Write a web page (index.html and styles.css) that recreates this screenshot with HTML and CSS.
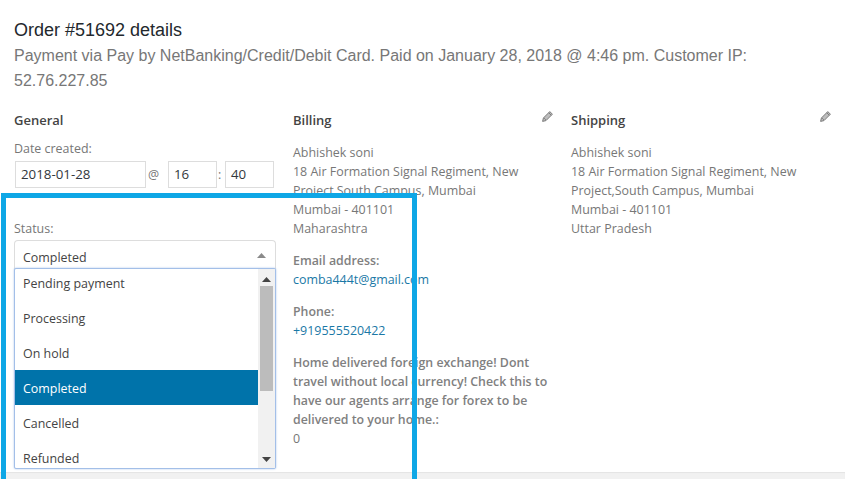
FILE: index.html
```html
<!DOCTYPE html>
<html lang="en">
<head>
<meta charset="utf-8">
<title>Order #51692 details</title>
<link rel="stylesheet" href="styles.css">
</head>
<body>
<main class="panel">
  <h1 class="title">Order #51692 details</h1>
  <p class="meta">Payment via Pay by NetBanking/Credit/Debit Card. Paid on January 28, 2018 @ 4:46 pm. Customer IP: 52.76.227.85</p>
  <div class="columns">
    <section class="col col-general">
      <h3 class="heading">General</h3>
      <label class="label">Date created:</label>
      <div class="date-row">
        <span class="input input-date">2018-01-28</span>
        <span class="sep sep-at">@</span>
        <span class="input input-time">16</span>
        <span class="sep sep-colon">:</span>
        <span class="input input-time">40</span>
      </div>
      <label class="label label-status">Status:</label>
      <div class="select">
        <span>Completed</span>
        <svg class="arrow" width="9" height="5" viewBox="0 0 9 5"><path d="M0 5L4.5 0L9 5Z" fill="#8a8a8a"/></svg>
      </div>
      <div class="dropdown">
        <ul class="options">
          <li>Pending payment</li>
          <li>Processing</li>
          <li>On hold</li>
          <li class="selected">Completed</li>
          <li>Cancelled</li>
          <li>Refunded</li>
        </ul>
        <div class="scrollbar">
          <svg class="scroll-btn" width="9" height="5" viewBox="0 0 9 5"><path d="M0 5L4.5 0L9 5Z" fill="#444"/></svg>
          <div class="thumb"></div>
          <svg class="scroll-btn scroll-down" width="9" height="5" viewBox="0 0 9 5"><path d="M0 0L4.5 5L9 0Z" fill="#444"/></svg>
        </div>
      </div>
    </section>
    <section class="col">
      <h3 class="heading">Billing
        <svg class="pencil" width="11" height="11" viewBox="0 0 11 11"><path d="M7.8 0.6L10.4 3.2L4 9.6L0.6 10.4L1.4 7ZM2.2 7.2L3.8 8.8M6.8 1.8L9.2 4.2" fill="#bdbdbd" stroke="#7c7c7c" stroke-width="1"/></svg>
      </h3>
      <p class="address">Abhishek soni<br>18 Air Formation Signal Regiment, New<br>Project,South Campus, Mumbai<br>Mumbai - 401101<br>Maharashtra</p>
      <p class="field"><strong>Email address:</strong><br><a href="#">comba444t@gmail.com</a></p>
      <p class="field"><strong>Phone:</strong><br><a href="#">+919555520422</a></p>
      <p class="field"><strong>Home delivered foreign exchange! Dont travel without local currency! Check this to have our agents arrange for forex to be delivered to your home.:</strong><br>0</p>
    </section>
    <section class="col">
      <h3 class="heading">Shipping
        <svg class="pencil" width="11" height="11" viewBox="0 0 11 11"><path d="M7.8 0.6L10.4 3.2L4 9.6L0.6 10.4L1.4 7ZM2.2 7.2L3.8 8.8M6.8 1.8L9.2 4.2" fill="#bdbdbd" stroke="#7c7c7c" stroke-width="1"/></svg>
      </h3>
      <p class="address">Abhishek soni<br>18 Air Formation Signal Regiment, New<br>Project,South Campus, Mumbai<br>Mumbai - 401101<br>Uttar Pradesh</p>
    </section>
  </div>
</main>
<footer class="strip"></footer>
<div class="highlight"></div>
</body>
</html>
```
FILE: styles.css
```css
* { box-sizing: border-box; }
html, body { margin: 0; padding: 0; }
body {
  position: relative;
  width: 845px;
  height: 479px;
  overflow: hidden;
  background: #fff;
  font-family: "Open Sans", sans-serif;
  font-size: 12.45px;
  line-height: 19px;
  color: #777;
}
.panel { height: 472px; padding: 20px 14px 0; overflow: hidden; }
.title {
  margin: 0;
  font: 400 18px/20px "Liberation Sans", sans-serif;
  color: #23282d;
}
.meta {
  margin: 3px 0 0;
  width: 780px;
  font: 400 16px/25px "Liberation Sans", sans-serif;
  color: #777;
}
.columns {
  display: grid;
  grid-template-columns: 279px 278px 260px;
  margin-top: 17px;
}
.col { position: relative; min-width: 0; }
.heading {
  position: relative;
  width: 260px;
  margin: 0 0 13px;
  font-size: 13px;
  line-height: 20px;
  font-weight: 600;
  color: #444;
}
.pencil { position: absolute; right: 0; top: 1px; }
.label { display: block; line-height: 19px; }
.col-general .heading { margin-bottom: 9px; }
.date-row { display: flex; align-items: center; margin-top: 3px; }
.input {
  height: 27px;
  padding: 0 5px;
  border: 1px solid #ddd;
  font-size: 13.3px;
  line-height: 25px;
  color: #32373c;
}
.input-date { width: 131px; margin-left: 1px; }
.input-time { width: 49px; }
.sep { color: #777; }
.sep-at { width: 22px; padding-left: 2px; }
.sep-colon { width: 8px; padding-left: 1px; }
.label-status { margin-top: 31px; }
.select {
  display: flex;
  align-items: center;
  justify-content: space-between;
  width: 262px;
  height: 29px;
  margin-top: 2px;
  padding: 4px 9px 0 8px;
  border: 1px solid #ddd;
  border-bottom: 0;
  border-radius: 4px 4px 0 0;
  color: #444;
}
.arrow { margin-bottom: 4px; }
.dropdown {
  display: flex;
  width: 262px;
  height: 201px;
  margin-top: -1px;
  border: 1px solid #a3bfe8;
  border-radius: 2px;
  box-shadow: 0 0 2px #a3bfe8;
  background: #fff;
  overflow: hidden;
}
.options {
  flex: 1;
  margin: -4px 0 0;
  padding: 0;
  list-style: none;
  color: #444;
}
.options li { height: 35px; padding: 9px 8px 0; line-height: 19px; }
.options .selected { background: #0073aa; color: #fff; }
.scrollbar {
  position: relative;
  display: flex;
  flex-direction: column;
  align-items: center;
  width: 17px;
  background: #f1f1f1;
}
.scroll-btn { flex: none; margin-top: 8px; }
.thumb { width: 13px; height: 105px; margin-top: 4px; background: #bcbcbc; }
.scroll-down { position: absolute; bottom: 6px; margin: 0; }
.address { margin: 0 0 13px; }
.field { margin: 0 0 13px; width: 260px; }
.field strong { font-weight: 600; font-size: 12.35px; color: #808080; }
.field a { color: #1a78a6; text-decoration: none; }
.strip {
  height: 7px;
  background: #f1f1f1;
  box-shadow: inset 0 1px 1px #e4e4e4;
}
.highlight {
  position: absolute;
  left: 1px;
  top: 193px;
  width: 416px;
  height: 300px;
  border: 5px solid #0ea7e6;
}
```
